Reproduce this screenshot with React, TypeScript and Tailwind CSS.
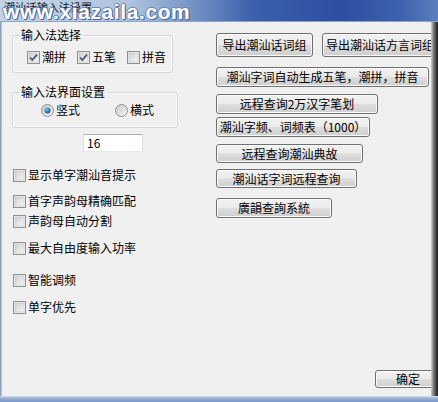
import React from "react";

const font = { fontFamily: '"Noto Sans CJK SC", "Noto Sans", sans-serif' };

function Btn({ label, w, h, className = "" }: { label: string; w: string; h: string; className?: string }) {
  return (
    <div
      className={`${w} ${h} ${className} shrink-0 flex items-center justify-center rounded-[3px] border border-[#707070] bg-[linear-gradient(#f2f2f2_0%,#ebebeb_48%,#dddddd_52%,#cfcfcf_100%)] shadow-[inset_0_0_0_1px_#fbfbfb] text-[12px] leading-[14px] text-black whitespace-nowrap`}
    >
      {label}
    </div>
  );
}

function Check({ checked = false }: { checked?: boolean }) {
  return (
    <svg width="13" height="13" viewBox="0 0 13 13" className="shrink-0">
      <defs>
        <linearGradient id="cbg" x1="0" y1="0" x2="1" y2="1">
          <stop offset="0" stopColor="#cfcfcf" />
          <stop offset="1" stopColor="#f7f7f7" />
        </linearGradient>
      </defs>
      <rect x="0.5" y="0.5" width="12" height="12" fill="#f4f4f4" stroke="#8f8f8f" />
      <rect x="2" y="2" width="9" height="9" fill="url(#cbg)" stroke="#c4c4c4" strokeWidth="0.6" />
      {checked && (
        <path d="M3 6.5 L5.3 9 L10 3.6" fill="none" stroke="#3d4f7a" strokeWidth="1.6" />
      )}
    </svg>
  );
}

function Radio({ checked = false }: { checked?: boolean }) {
  return (
    <svg width="13" height="13" viewBox="0 0 13 13" className="shrink-0">
      <defs>
        <linearGradient id="rbg" x1="0" y1="0" x2="1" y2="1">
          <stop offset="0" stopColor="#c9c9c9" />
          <stop offset="1" stopColor="#f7f7f7" />
        </linearGradient>
        <radialGradient id="rdot" cx="0.4" cy="0.35" r="0.7">
          <stop offset="0" stopColor="#8ad0f5" />
          <stop offset="0.6" stopColor="#2c77b8" />
          <stop offset="1" stopColor="#1c4a7a" />
        </radialGradient>
      </defs>
      <circle cx="6.5" cy="6.5" r="6" fill="url(#rbg)" stroke="#8f8f8f" />
      {checked && <circle cx="6.5" cy="6.5" r="3" fill="url(#rdot)" />}
    </svg>
  );
}

function Row({ label, className = "" }: { label: string; className?: string }) {
  return (
    <div className={`flex items-center gap-[2px] h-[16px] ml-[1px] whitespace-nowrap ${className}`}>
      <Check />
      <span className="text-[12px] leading-[16px]">{label}</span>
    </div>
  );
}

export default function App() {
  return (
    <div className="w-[438px] h-[402px] flex flex-col overflow-hidden bg-[#f0f0f0] text-black" style={font}>
      {/* title bar */}
      <div className="relative h-[22px] shrink-0 bg-[linear-gradient(to_right,#c4d3e7_0%,#aec3de_30%,#6f8fc4_45%,#3a60ab_58%,#2c4f9f_78%,#3d63ad_92%,#5b80c0_100%)] border-b border-[#8aa3c8]">
        <span className="absolute left-[4px] top-[1px] text-[11px] leading-[13px] text-[#111] whitespace-nowrap">潮汕话输入法设置</span>
        <span
          className="absolute left-[3px] top-[2px] text-[21px] leading-[20px] font-bold tracking-[0.6px] text-white whitespace-nowrap"
          style={{
            fontFamily: '"Liberation Sans", Arial, sans-serif',
            textShadow: "1px 1px 0 #4a6a9c, -1px 0 0 #6d85ad, 0 -1px 0 #6d85ad, 1px 0 0 #4a6a9c",
          }}
        >
          www.xiazaila.com
        </span>
      </div>

      <div className="flex-1 flex min-h-0">
        <div className="w-[2px] shrink-0 bg-[linear-gradient(to_right,#7f95b8,#c2cfe0)]" />
        <div className="flex-1 min-w-0 flex flex-col overflow-hidden">
          <div className="flex flex-1 min-h-0">
            {/* left column */}
            <div className="w-[214px] shrink-0 pl-[10px] pt-[5px] flex flex-col">
              <fieldset className="w-[161px] border border-[#d3d7db] rounded-[3px] shadow-[inset_0_0_0_1px_#fafafa]">
                <legend className="ml-[6px] px-[2px] text-[12px] leading-[16px]">输入法选择</legend>
                <div className="flex items-center h-[16px] pl-[14px] mt-[6px] mb-[7px] whitespace-nowrap">
                  <div className="w-[50px] flex items-center gap-[2px]">
                    <Check checked />
                    <span className="text-[12px] leading-[16px]">潮拼</span>
                  </div>
                  <div className="w-[50px] flex items-center gap-[2px]">
                    <Check checked />
                    <span className="text-[12px] leading-[16px]">五笔</span>
                  </div>
                  <div className="flex items-center gap-[2px]">
                    <Check />
                    <span className="text-[12px] leading-[16px]">拼音</span>
                  </div>
                </div>
              </fieldset>

              <fieldset className="mt-[11px] w-[166px] border border-[#d3d7db] rounded-[3px] shadow-[inset_0_0_0_1px_#fafafa]">
                <legend className="ml-[6px] px-[2px] text-[12px] leading-[16px]">输入法界面设置</legend>
                <div className="flex items-center h-[16px] pl-[28px] mt-[2px] mb-[9px] whitespace-nowrap">
                  <div className="w-[74px] flex items-center gap-[2px]">
                    <Radio checked />
                    <span className="text-[12px] leading-[16px]">竖式</span>
                  </div>
                  <div className="flex items-center gap-[2px]">
                    <Radio />
                    <span className="text-[12px] leading-[16px]">横式</span>
                  </div>
                </div>
              </fieldset>

              <div className="mt-[6px] ml-[71px] w-[60px] h-[18px] bg-white border border-t-[#abadb3] border-x-[#dbdfe6] border-b-[#e3e9ef] flex items-center pl-[3px] text-[12px] leading-[14px]">
                16
              </div>

              <Row label="显示单字潮汕音提示" className="mt-[15px]" />
              <Row label="首字声韵母精确匹配" className="mt-[10px]" />
              <Row label="声韵母自动分割" className="mt-[4px]" />
              <Row label="最大自由度输入功率" className="mt-[11px]" />
              <Row label="智能调频" className="mt-[16px]" />
              <Row label="单字优先" className="mt-[11px]" />
            </div>

            {/* right column */}
            <div className="flex-1 min-w-0 pt-[11px] flex flex-col items-start">
              <div className="flex gap-[9px]">
                <Btn label="导出潮汕话词组" w="w-[97px]" h="h-[24px]" />
                <Btn label="导出潮汕话方言词组" w="w-[116px]" h="h-[24px]" />
              </div>
              <Btn label="潮汕字词自动生成五笔，潮拼，拼音" w="w-[213px]" h="h-[20px]" className="mt-[10px]" />
              <Btn label="远程查询2万汉字笔划" w="w-[162px]" h="h-[20px]" className="mt-[7px]" />
              <Btn label="潮汕字频、词频表（1000）" w="w-[154px]" h="h-[20px]" className="mt-[3px]" />
              <Btn label="远程查询潮汕典故" w="w-[147px]" h="h-[19px]" className="mt-[7px]" />
              <Btn label="潮汕话字词远程查询" w="w-[141px]" h="h-[19px]" className="mt-[6px]" />
              <Btn label="廣韻查詢系統" w="w-[116px]" h="h-[20px]" className="mt-[10px]" />
            </div>
          </div>

          <div className="flex pl-[373px] pb-[8px] shrink-0">
            <Btn label="确定" w="w-[66px]" h="h-[18px]" />
          </div>
        </div>
        <div className="w-[7px] shrink-0 bg-[linear-gradient(to_right,#cfcfcf,#6a6a6a_45%,#1c1c1c)]" />
      </div>

      <div className="h-[6px] shrink-0 bg-[linear-gradient(#dfe8f3_0%,#9fb6d6_30%,#7593c3_100%)]" />
    </div>
  );
}
